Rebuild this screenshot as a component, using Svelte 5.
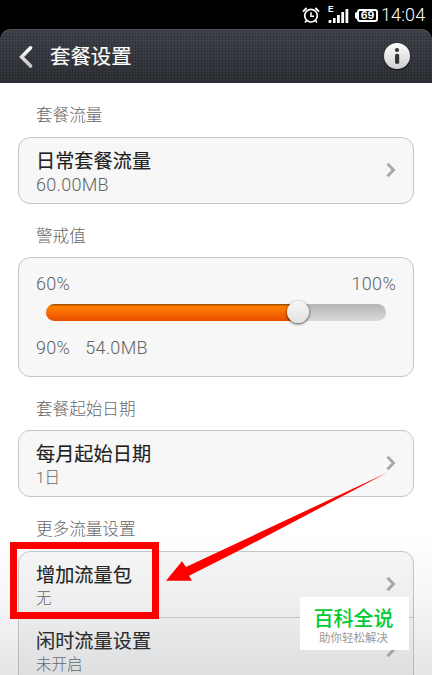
<script lang="ts">
	const min = 60;
	const max = 100;
	let percent = $state(90);
	let total = 60;

	let fill = $derived(((percent - min) / (max - min)) * 100 - 0.9);
	let warning = $derived(((total * percent) / 100).toFixed(1) + 'MB');
</script>

{#snippet row(title: string, value: string, large = false)}
	<div class="row">
		<div class="text">
			<div class="title">{title}</div>
			<div class="value" class:large>{value}</div>
		</div>
		<svg class="chevron" width="10" height="16" viewBox="0 0 10 16">
			<path d="M1.5 1.7 L7.5 8 L1.5 14.3" fill="none" stroke="#a9a9a9" stroke-width="3" />
		</svg>
	</div>
{/snippet}

<div class="screen">
	<div class="status">
		<svg class="alarm" width="18" height="17" viewBox="0 0 18 17" fill="none" stroke="#fff">
			<circle cx="9" cy="8.7" r="6.3" stroke-width="1.7" />
			<path d="M9 5.2 V9.2 H12" stroke-width="1.5" />
			<path d="M1 4.6 L4.6 1 M17 4.6 L13.4 1" stroke-width="1.9" />
			<path d="M4.8 13.2 L3 15.6 M13.2 13.2 L15 15.6" stroke-width="1.6" />
		</svg>
		<div class="signal">
			<span class="net">E</span>
			<svg width="21" height="15" viewBox="0 0 21 15" fill="#fff">
				<rect x="0.5" y="12" width="3" height="3" rx="1" />
				<rect x="5" y="10" width="2.6" height="5" />
				<rect x="9" y="7" width="2.8" height="8" />
				<rect x="13.3" y="4" width="2.8" height="11" />
				<rect x="17.5" y="1" width="2.8" height="14" />
			</svg>
		</div>
		<div class="battery"><span>69</span></div>
		<span class="clock">14:04</span>
	</div>

	<header>
		<svg class="back" width="16" height="24" viewBox="0 0 16 24">
			<defs>
				<linearGradient id="backFill" x1="0" y1="0" x2="0" y2="1">
					<stop offset="0" stop-color="#fff" />
					<stop offset="1" stop-color="#c4c4c6" />
				</linearGradient>
			</defs>
			<path
				d="M12.6 2.8 L3.6 12 L12.6 21"
				fill="none"
				stroke="url(#backFill)"
				stroke-width="3.6"
				stroke-linecap="round"
			/>
		</svg>
		<h1>套餐设置</h1>
		<div class="info">
			<svg width="26" height="26" viewBox="0 0 26 26" fill="#34353a">
				<circle cx="13" cy="7" r="2.1" />
				<rect x="11" y="10.7" width="4.2" height="10.4" rx="1.8" />
			</svg>
		</div>
	</header>

	<main>
		<h2 class="first">套餐流量</h2>
		<div class="card">{@render row('日常套餐流量', '60.00MB', true)}</div>

		<h2>警戒值</h2>
		<div class="card slider">
			<div class="range"><span>{min}%</span><span>{max}%</span></div>
			<div class="track">
				<div class="fill" style="width: {fill}%"><div class="thumb"></div></div>
			</div>
			<div class="current"><span>{percent}%</span><span>{warning}</span></div>
		</div>

		<h2>套餐起始日期</h2>
		<div class="card">{@render row('每月起始日期', '1日')}</div>

		<h2 class="more">更多流量设置</h2>
		<div class="card last">
			{@render row('增加流量包', '无')}
			{@render row('闲时流量设置', '未开启')}
		</div>
	</main>

	<div class="shade"></div>

	<div class="highlight"></div>
	<svg class="arrow" width="434" height="675" viewBox="0 0 434 675">
		<path
			d="M387.5 472.5 L186 567 L182 561.3 L166 580.8 L192 580.8 L189 575.8 L240 550 Z"
			fill="#fe0000"
		/>
	</svg>

	<div class="badge">
		<div class="brand">百科全说</div>
		<div class="slogan">助你轻松解决</div>
	</div>
</div>

<style>
	:global(body) {
		margin: 0;
		background: #fff;
	}

	.screen {
		position: relative;
		width: 432px;
		height: 675px;
		overflow: hidden;
		box-sizing: border-box;
		font-family: Roboto, 'Noto Sans CJK SC', sans-serif;
		background: linear-gradient(#000 40px, #fff 40px);
	}

	/* status bar */
	.status {
		display: flex;
		align-items: center;
		height: 29px;
		padding: 1px 7px 0 0;
		box-sizing: border-box;
		justify-content: flex-end;
		background: #000;
		color: #fff;
	}

	.alarm {
		margin-right: 8px;
	}

	.signal {
		display: flex;
		position: relative;
		margin-right: 8px;
	}

	.net {
		position: absolute;
		left: 0;
		top: -3px;
		font: bold 8.5px/9px 'Liberation Sans', sans-serif;
	}

	.battery {
		position: relative;
		width: 21px;
		height: 13px;
		box-sizing: border-box;
		border: 2px solid #fff;
		border-radius: 3px;
		font: bold 10.5px/9px Inter, sans-serif;
		text-align: center;
		margin-right: 3px;
	}

	.battery::before {
		content: '';
		position: absolute;
		left: -4px;
		top: 1px;
		width: 3px;
		height: 7px;
		border-radius: 2px 0 0 2px;
		background: #fff;
	}

	.clock {
		width: 44px;
		font-size: 18px;
		line-height: 20px;
		font-weight: 300;
		letter-spacing: 0.1px;
		white-space: nowrap;
	}

	/* title bar */
	header {
		display: flex;
		align-items: center;
		height: 54px;
		padding: 0 22px 0 18px;
		box-sizing: border-box;
		border-top: 1px solid #55565c;
		border-radius: 11px 11px 0 0;
		background:
			repeating-linear-gradient(90deg, rgba(0, 0, 0, 0.13) 0 1px, transparent 1px 3px),
			repeating-linear-gradient(rgba(0, 0, 0, 0.13) 0 1px, transparent 1px 3px),
			linear-gradient(#42454d, #303238);
	}

	h1 {
		flex: 1;
		margin: 0 0 0 16px;
		font-size: 20.4px;
		font-weight: 400;
		line-height: 28px;
		color: #fff;
		-webkit-text-stroke: 0.15px #fff;
	}

	.info {
		width: 26px;
		height: 26px;
		margin-top: -1px;
		border-radius: 50%;
		background: linear-gradient(#fff, #cfcfcf);
		box-shadow: 0 1px 2px rgba(0, 0, 0, 0.6);
	}

	.info svg {
		display: block;
	}

	/* content */
	main {
		padding: 0 18px;
		background: #fff;
	}

	h2 {
		height: 53px;
		margin: 0;
		padding: 20px 0 0 18px;
		box-sizing: border-box;
		font-size: 16.6px;
		font-weight: 300;
		line-height: 25px;
		color: #686868;
	}

	h2.first,
	h2.more {
		height: 54px;
	}

	.card {
		box-sizing: border-box;
		border: 1px solid #c6c6c6;
		border-radius: 12px;
		background: #f7f7f7;
	}

	.row {
		display: flex;
		align-items: center;
		justify-content: space-between;
		height: 65px;
		padding: 0 17px;
	}

	.row + :global(.row) {
		border-top: 1px solid #c9cbcb;
	}

	.text {
		padding-top: 3px;
	}

	.chevron {
		margin-top: -2px;
	}

	.title {
		font-size: 19.2px;
		line-height: 26px;
		font-weight: 400;
		color: #202020;
		-webkit-text-stroke: 0.15px #202020;
	}

	.value {
		font-size: 15.5px;
		line-height: 20px;
		font-weight: 300;
		color: #646464;
	}

	.value.large {
		font-size: 18px;
		letter-spacing: 0.3px;
	}

	.slider {
		height: 120px;
		padding: 14px 17px 0;
		font-size: 18px;
		font-weight: 300;
		letter-spacing: 0.3px;
		color: #646464;
	}

	.range,
	.current {
		display: flex;
		line-height: 24px;
	}

	.range {
		justify-content: space-between;
	}

	.current {
		gap: 15px;
		margin-top: 15px;
	}

	.track {
		height: 17px;
		margin: 8px 10px 0;
		border-radius: 9px;
		background: linear-gradient(#b5b5b5, #dadada);
	}

	.fill {
		display: flex;
		justify-content: flex-end;
		height: 17px;
		box-sizing: border-box;
		border-radius: 9px;
		background: linear-gradient(#a65000 1px, #ff7a00 2px, #ff7a00 25%, #e64e00);
	}

	.thumb {
		flex: none;
		width: 22px;
		height: 22px;
		margin: -3px -11px 0 0;
		border-radius: 50%;
		background: linear-gradient(#f6f6f6, #e2e2e2);
		box-shadow: 0 1px 3px rgba(0, 0, 0, 0.75);
	}

	.last {
		height: 150px;
	}

	.shade {
		position: absolute;
		left: 0;
		right: 0;
		bottom: 0;
		height: 140px;
		background: linear-gradient(
			rgba(120, 125, 135, 0),
			rgba(120, 125, 135, 0.08) 50%,
			rgba(120, 125, 135, 0.2)
		);
	}

	.highlight {
		position: absolute;
		left: 10px;
		top: 542px;
		width: 149px;
		height: 77px;
		box-sizing: border-box;
		border: 7px solid #fe0000;
	}

	.arrow {
		position: absolute;
		left: 0;
		top: 0;
	}

	.badge {
		position: absolute;
		left: 300px;
		top: 597px;
		width: 109px;
		height: 53px;
		padding: 9px 2px 0 0;
		box-sizing: border-box;
		background: #fff;
		text-align: center;
	}

	.brand {
		font-size: 20px;
		line-height: 26px;
		font-weight: 500;
		color: #0c3;
	}

	.slogan {
		font-size: 11.5px;
		line-height: 13px;
		color: #999;
	}
</style>
